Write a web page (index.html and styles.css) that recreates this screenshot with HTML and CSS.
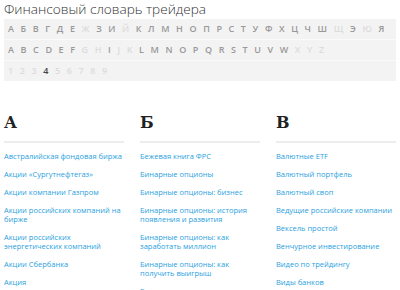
FILE: index.html
```html
<!DOCTYPE html>
<html lang="ru">
<head>
    <meta charset="UTF-8">
    <meta name="viewport" content="width=device-width, initial-scale=1.0">
    <title>Финансовый словарь трейдера</title>
    <link rel="stylesheet" href="styles.css">
</head>
<body>
    <div class="dictionary">
        <h1>Финансовый словарь трейдера</h1>

        <div class="alphabet">
            <div class="alphabet-row">
                <a>А</a><a>Б</a><a>В</a><a>Г</a><a>Д</a><a>Е</a><span>Ж</span><a>З</a><a>И</a><span>Й</span>
                <a>К</a><a>Л</a><a>М</a><a>Н</a><a>О</a><a>П</a><a>Р</a><a>С</a><a>Т</a><a>У</a>
                <a>Ф</a><a>Х</a><a>Ц</a><a>Ч</a><a>Ш</a><span>Щ</span><a>Э</a><span>Ю</span><a>Я</a>
            </div>
            <div class="alphabet-row">
                <a>A</a><a>B</a><a>C</a><a>D</a><a>E</a><a>F</a><span>G</span><span>H</span><a>I</a><span>J</span>
                <span>K</span><a>L</a><a>M</a><a>N</a><a>O</a><a>P</a><a>Q</a><a>R</a><a>S</a><a>T</a>
                <a>U</a><a>V</a><a>W</a><span>X</span><span>Y</span><span>Z</span>
            </div>
            <div class="alphabet-row">
                <span>1</span><span>2</span><span>3</span><a class="current">4</a><span>5</span><span>6</span><span>7</span><span>8</span><span>9</span>
            </div>
        </div>

        <div class="sections">
            <div class="section">
                <h2>А</h2>
                <ul>
                    <li><a href="#">Австралийская фондовая биржа</a></li>
                    <li><a href="#">Акции «Сургутнефтегаз»</a></li>
                    <li><a href="#">Акции компании Газпром</a></li>
                    <li><a href="#">Акции российских компаний на бирже</a></li>
                    <li><a href="#">Акции российских энергетических компаний</a></li>
                    <li><a href="#">Акции Сбербанка</a></li>
                    <li><a href="#">Акция</a></li>
                    <li><a href="#">Акционер</a></li>
                </ul>
            </div>
            <div class="section">
                <h2>Б</h2>
                <ul>
                    <li><a href="#">Бежевая книга ФРС</a></li>
                    <li><a href="#">Бинарные опционы</a></li>
                    <li><a href="#">Бинарные опционы: бизнес</a></li>
                    <li><a href="#">Бинарные опционы: история появления и развития</a></li>
                    <li><a href="#">Бинарные опционы: как заработать миллион</a></li>
                    <li><a href="#">Бинарные опционы: как получить выигрыш</a></li>
                    <li><a href="#">Бинарные опционы: стратегии</a></li>
                </ul>
            </div>
            <div class="section">
                <h2>В</h2>
                <ul>
                    <li><a href="#">Валютные ETF</a></li>
                    <li><a href="#">Валютный портфель</a></li>
                    <li><a href="#">Валютный своп</a></li>
                    <li><a href="#">Ведущие российские компании</a></li>
                    <li><a href="#">Вексель простой</a></li>
                    <li><a href="#">Венчурное инвестирование</a></li>
                    <li><a href="#">Видео по трейдингу</a></li>
                    <li><a href="#">Виды банков</a></li>
                </ul>
            </div>
        </div>
    </div>
</body>
</html>
```

FILE: styles.css
```css
body {
    margin: 0;
    font-family: "Open Sans", Arial, sans-serif;
    background: #fff;
    overflow: hidden;
}
.dictionary {
    padding: 0 4px;
}
h1 {
    margin: 0 0 2px;
    font-size: 13.6px;
    font-weight: 300;
    line-height: 17px;
    color: #333;
}
.alphabet {
    background: #f3f3f3;
}
.alphabet-row {
    display: flex;
    gap: 6.6px;
    padding: 0 4px;
    height: 20px;
    line-height: 20px;
    font-size: 9px;
    font-weight: 600;
    border-bottom: 1px solid #fafafa;
}
.alphabet-row:last-child {
    border-bottom: none;
}
.alphabet-row a {
    color: #999;
}
.alphabet-row span {
    color: #dcdcdc;
}
.alphabet-row a.current {
    color: #444;
}
.sections {
    display: grid;
    grid-template-columns: 120px 120px 120px;
    column-gap: 16px;
    margin-top: 32px;
}
h2 {
    margin: 0;
    padding-bottom: 8px;
    font-family: "DejaVu Serif", Georgia, serif;
    font-size: 16px;
    font-weight: bold;
    line-height: 20px;
    color: #222;
    border-bottom: 2px solid #ececec;
}
ul {
    list-style: none;
    margin: 0;
    padding: 9px 0 0;
}
li {
    margin-bottom: 9px;
    font-size: 7.5px;
    line-height: 9px;
}
li a {
    color: #2a9fe0;
    text-decoration: none;
}
```
